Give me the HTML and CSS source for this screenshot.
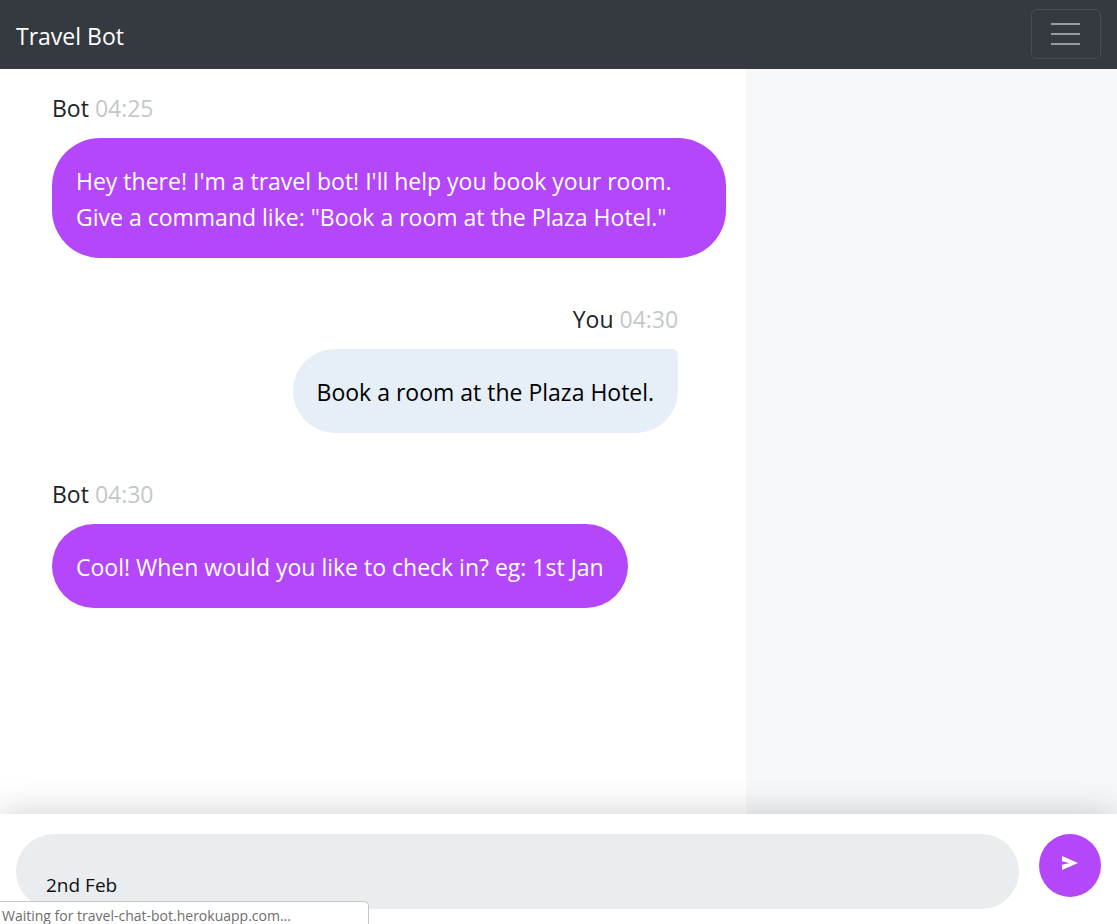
FILE: index.html
```
<!DOCTYPE html>
<html lang="en">
<head>
<meta charset="utf-8">
<meta name="viewport" content="width=device-width, initial-scale=1">
<title>Travel Bot</title>
<link rel="stylesheet" href="styles.css">
</head>
<body>
<header class="navbar">
  <a class="brand" href="#">Travel Bot</a>
  <button class="toggler" type="button" aria-label="Toggle navigation">
    <svg class="toggler-icon" viewBox="0 0 32 30" aria-hidden="true"><path d="M1 5h29M1 15h29M1 25h29"/></svg>
  </button>
</header>
<main class="content">
  <section class="chat" aria-label="Conversation">
    <article class="message">
      <div class="meta">Bot <time class="time">04:25</time></div>
      <p class="bubble bubble-bot">Hey there! I'm a travel bot! I'll help you book your room. Give a command like: "Book a room at the Plaza Hotel."</p>
    </article>
    <article class="message message-user">
      <div class="meta">You <time class="time">04:30</time></div>
      <p class="bubble bubble-user">Book a room at the Plaza Hotel.</p>
    </article>
    <article class="message">
      <div class="meta">Bot <time class="time">04:30</time></div>
      <p class="bubble bubble-bot">Cool! When would you like to check in? eg: 1st Jan</p>
    </article>
  </section>
  <aside class="side"></aside>
</main>
<form class="composer">
  <input class="entry" type="text" aria-label="Message" value="2nd Feb">
  <button class="send" type="button" aria-label="Send">
    <svg class="send-icon" viewBox="0 0 16 14" aria-hidden="true"><path d="M0 0L16 7L0 14V8.700L7.500 7L0 5.300Z"/></svg>
  </button>
</form>
<div class="status">Waiting for travel-chat-bot.herokuapp.com...</div>
</body>
</html>
```
FILE: styles.css
```
* { box-sizing: border-box; }

body {
  display: flex;
  flex-direction: column;
  height: 100vh;
  margin: 0;
  overflow: hidden;
  background: #fff;
  color: #212529;
  font: 23px/36px "Segoe UI", "Open Sans", "Noto Sans", sans-serif;
}

button, input { font: inherit; }

.navbar {
  display: flex;
  align-items: center;
  justify-content: space-between;
  padding: 9px 16px 10px;
  background: #343a40;
}

.brand {
  padding-top: 4px;
  color: #fff;
  text-decoration: none;
}

.toggler {
  display: flex;
  padding: 9px 18px;
  border: 1px solid #484d53;
  border-radius: 6px;
  background: transparent;
}

.toggler-icon {
  width: 32px;
  height: 30px;
  fill: none;
  stroke: #999c9f;
  stroke-width: 2;
}

.content {
  display: flex;
  flex: 1;
  min-height: 0;
}

.chat {
  display: flex;
  flex: 0 0 66.8%;
  flex-direction: column;
  gap: 43px;
  padding: 21px 20px 0 52px;
}

.message {
  display: flex;
  flex-direction: column;
  align-items: flex-start;
  gap: 12px;
}

.message-user {
  align-items: flex-end;
  padding-right: 48px;
}

.time { color: #c3c8ca; }

.bubble {
  margin: 0;
  padding: 25px 24px 23px;
  border-radius: 48px;
}

.bubble-bot {
  background: #b347f9;
  color: #fff;
}

.bubble-user {
  border-top-right-radius: 6px;
  background: #e6eef7;
  color: #000;
}

.side {
  flex: 1;
  background: #f7f8fa;
}

.composer {
  position: relative;
  display: flex;
  align-items: flex-start;
  gap: 20px;
  padding: 20px 16px 15px;
  background: #fff;
  box-shadow: 0 0 36px rgba(0, 0, 0, 0.2);
}

.entry {
  flex: 1;
  min-width: 0;
  height: 75px;
  padding: 26px 30px 0;
  border: 0;
  border-radius: 38px;
  background: #e9edf0;
  color: #111;
  font-size: 19px;
}

.send {
  display: flex;
  align-items: center;
  justify-content: center;
  width: 62px;
  height: 63px;
  padding: 0 0 5px;
  border: 0;
  border-radius: 50%;
  background: #b347f9;
}

.send-icon {
  width: 16px;
  height: 14px;
  fill: #fff;
}

.status {
  position: absolute;
  bottom: 0;
  left: 0;
  width: 369px;
  height: 23px;
  padding-left: 2px;
  border: 1px solid #c4c7ca;
  border-width: 1px 1px 0 0;
  border-top-right-radius: 5px;
  background: #fff;
  color: #6e6e6e;
  font-size: 14px;
  line-height: 27px;
  white-space: nowrap;
}
```
